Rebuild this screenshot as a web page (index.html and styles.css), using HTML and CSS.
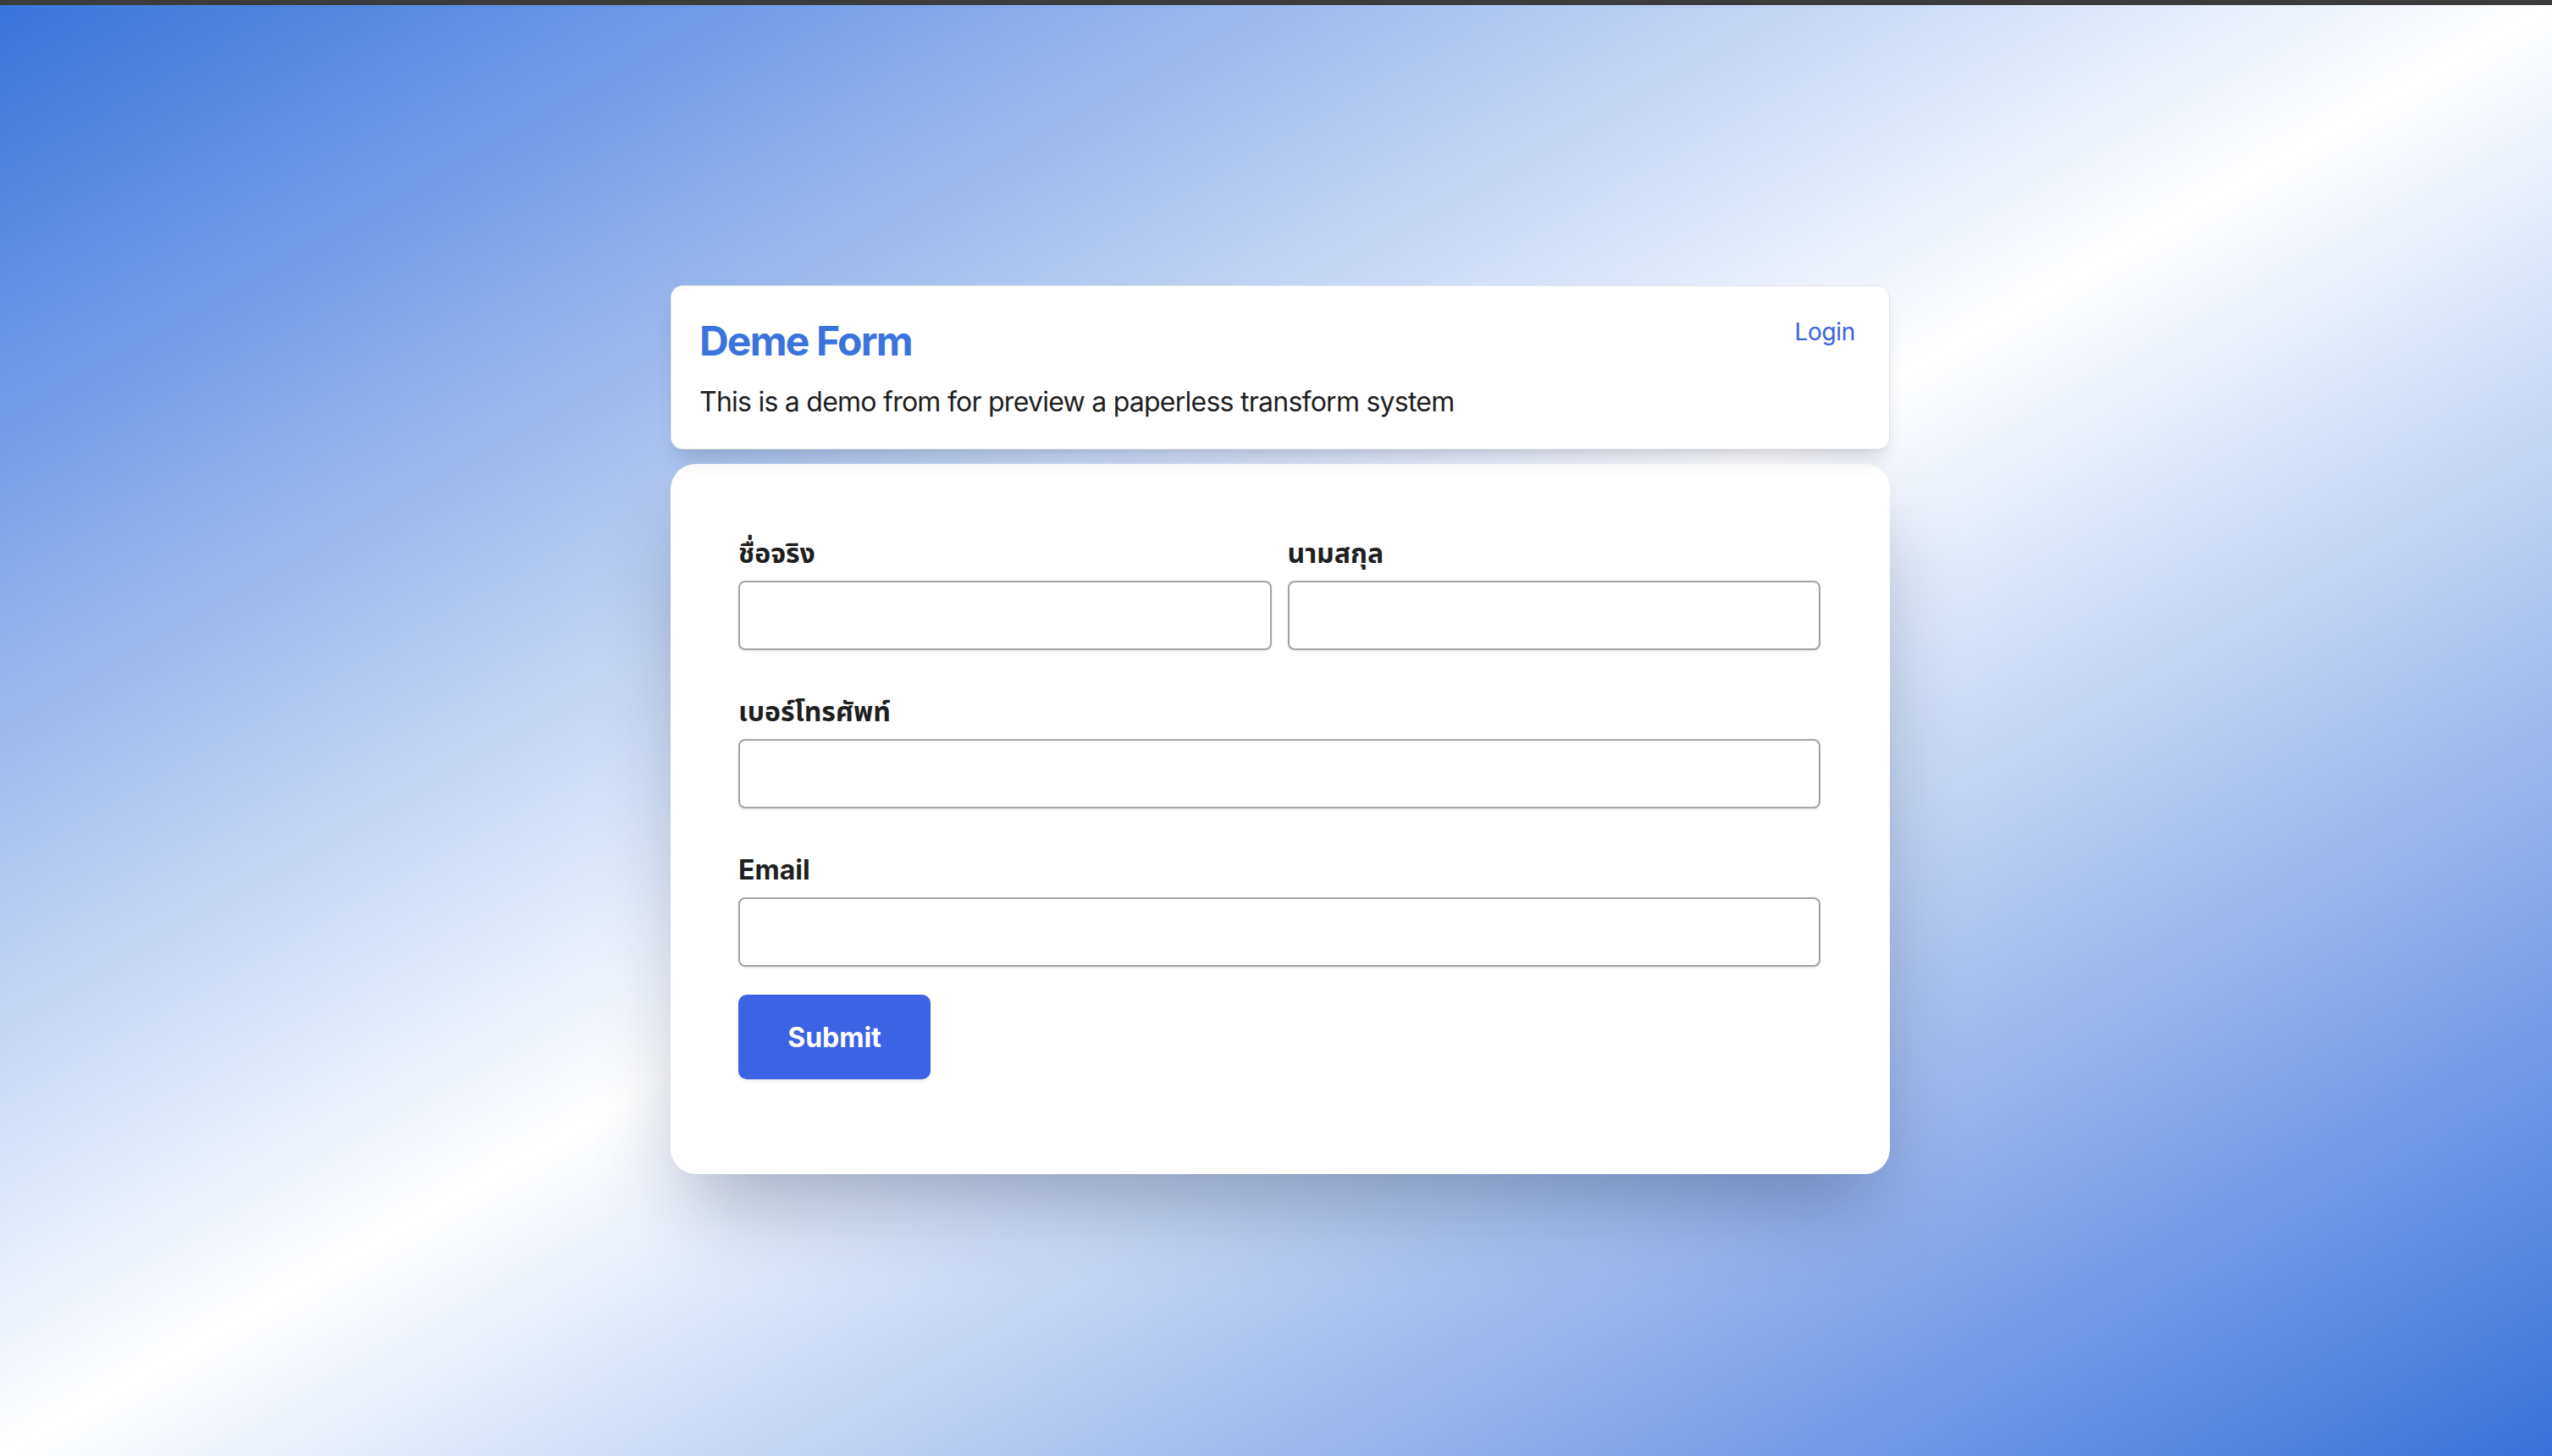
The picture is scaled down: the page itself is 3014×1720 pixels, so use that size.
FILE: index.html
```html
<!DOCTYPE html>
<html lang="th">
<head>
<meta charset="utf-8">
<title>Deme Form</title>
<link rel="stylesheet" href="styles.css">
</head>
<body>
<div class="topbar"></div>
<main class="page">
  <div class="container">
    <header class="head-card">
      <div class="head-text">
        <h1 class="title">Deme Form</h1>
        <p class="desc">This is a demo from for preview a paperless transform system</p>
      </div>
      <a class="login" href="#">Login</a>
    </header>
    <form class="form-card">
      <div class="row two">
        <div class="field">
          <label class="label">ชื่อจริง</label>
          <input class="input" type="text">
        </div>
        <div class="field">
          <label class="label">นามสกุล</label>
          <input class="input" type="text">
        </div>
      </div>
      <div class="row">
        <div class="field">
          <label class="label">เบอร์โทรศัพท์</label>
          <input class="input" type="text">
        </div>
      </div>
      <div class="row last">
        <div class="field">
          <label class="label">Email</label>
          <input class="input" type="text">
        </div>
      </div>
      <div class="actions">
        <button class="submit" type="button">Submit</button>
      </div>
    </form>
  </div>
</main>
</body>
</html>
```

FILE: styles.css
```css
* { box-sizing: border-box; }
html, body { margin: 0; padding: 0; }
body {
  font-family: Inter, "Noto Sans Thai", "Noto Sans", "DejaVu Sans", sans-serif;
  color: #1f1f1f;
  background: #3c3c3c;
}
.topbar {
  height: 6px;
  background: #3c3c3c;
}
.page {
  min-height: 1714px;
  background: linear-gradient(to bottom right, #3a74dc 0%, #ffffff 50%, #3a72db 100%);
  display: flex;
  justify-content: center;
  align-items: flex-start;
  padding: 331px 0 0 10px;
}
.container {
  width: 1440px;
  display: flex;
  flex-direction: column;
  gap: 17px;
}
.head-card {
  position: relative;
  z-index: 1;
  background: #fff;
  border: 1px solid #e2e4ea;
  border-radius: 14px;
  padding: 36px 40px 36px 33px;
  display: flex;
  justify-content: space-between;
  align-items: flex-start;
  box-shadow: 0 18px 26px -10px rgba(20, 30, 60, 0.18), 0 4px 8px -4px rgba(0, 0, 0, 0.08);
}
.title {
  margin: 0;
  font-size: 48px;
  line-height: 58px;
  font-weight: 700;
  color: #3a73db;
  letter-spacing: -1.8px;
}
.desc {
  margin: 23px 0 0;
  font-size: 32px;
  line-height: 39px;
  color: #1f1f1f;
  letter-spacing: -0.75px;
}
.login {
  font-size: 28px;
  line-height: 34px;
  color: #3a62dc;
  text-decoration: none;
  margin-top: 1px;
  letter-spacing: -0.3px;
}
.form-card {
  background: #fff;
  border-radius: 30px;
  padding: 86px 82px 112px 80px;
  box-shadow: 0 50px 100px -24px rgba(10, 25, 70, 0.35);
}
.row {
  display: flex;
  gap: 19px;
  margin-bottom: 53px;
}
.row.last { margin-bottom: 33px; }
.field {
  flex: 1;
  display: flex;
  flex-direction: column;
}
.label {
  font-size: 32px;
  line-height: 39px;
  font-weight: 700;
  color: #1f1f1f;
  margin-bottom: 13px;
}
.input {
  height: 82px;
  border: 2px solid #a3a3a3;
  border-radius: 8px;
  background: #fff;
  box-shadow: 0 2px 3px rgba(0, 0, 0, 0.08);
  font-size: 32px;
  padding: 0 16px;
}
.actions { display: flex; }
.submit {
  width: 227px;
  height: 100px;
  border: none;
  border-radius: 10px;
  background: #3b63e4;
  color: #fff;
  font-family: Inter, "Noto Sans", sans-serif;
  font-size: 32px;
  font-weight: 700;
  box-shadow: 0 2px 4px rgba(0, 0, 0, 0.08);
}
```
